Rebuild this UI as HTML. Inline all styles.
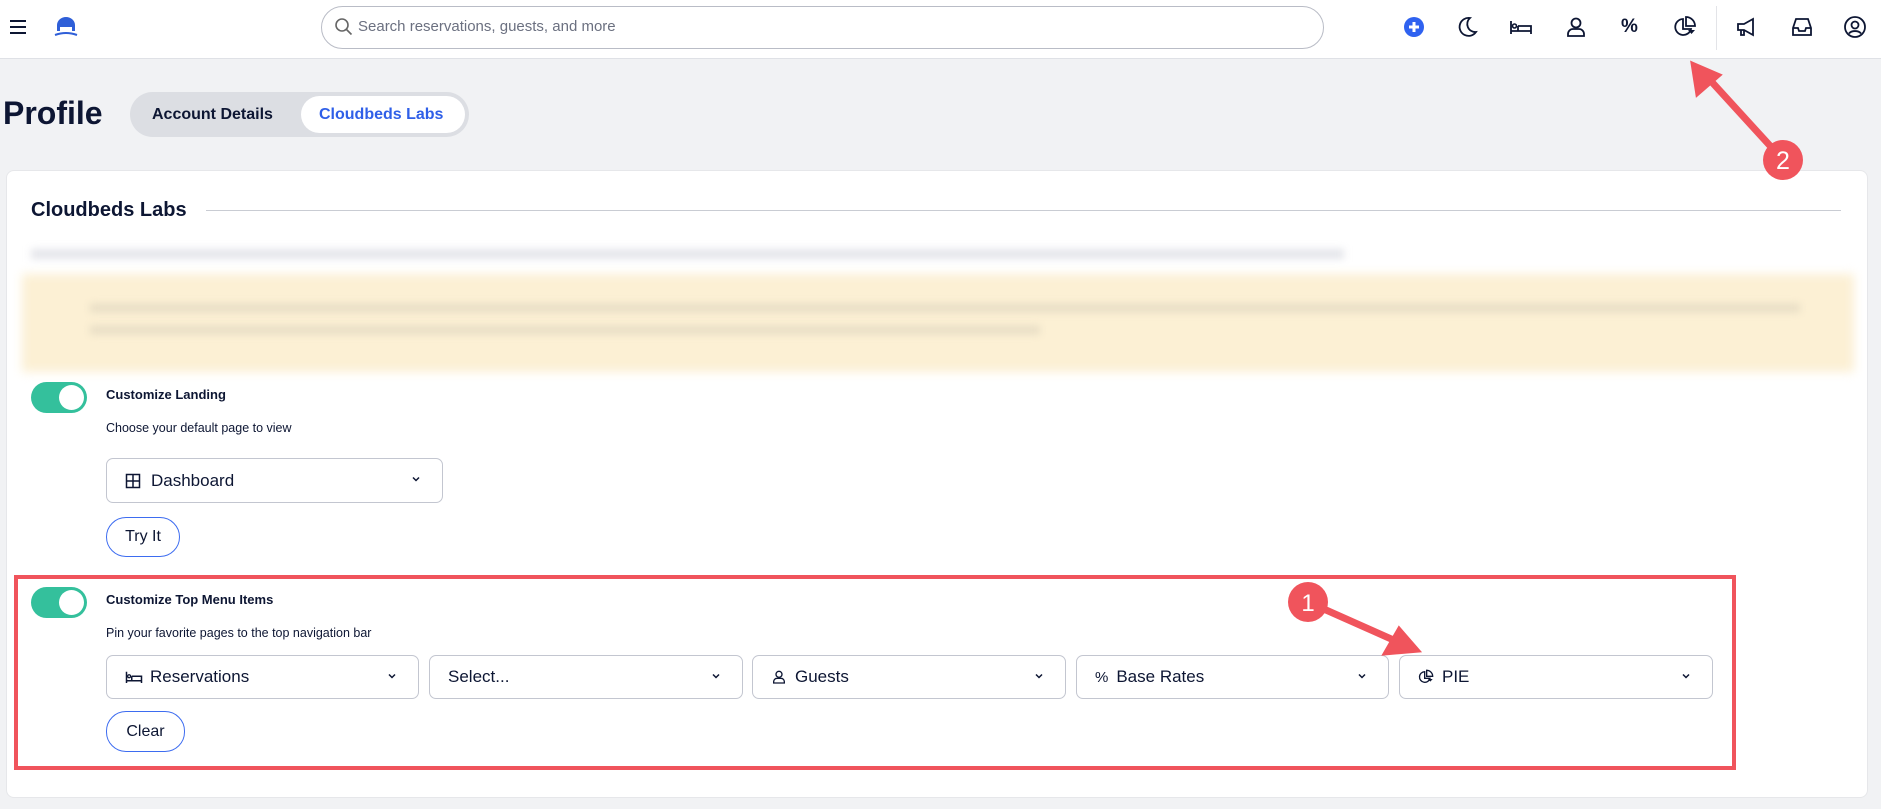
<!DOCTYPE html>
<html><head><meta charset="utf-8"><style>
*{box-sizing:border-box;margin:0;padding:0}
body{width:1881px;height:809px;background:#f1f2f4;font-family:"Liberation Sans",sans-serif;color:#0d1633;position:relative;overflow:hidden}
.a{position:absolute}
.hdr{left:0;top:0;width:1881px;height:59px;background:#fff;border-bottom:1px solid #dfe1e6}
.ico{position:absolute;top:15px;width:24px;height:24px}
.sel{position:absolute;height:44px;border:1px solid #c3c6d0;border-radius:7px;background:#fff;font-size:17px;display:flex;align-items:center;padding-left:18px}
.sel .chev{position:absolute;right:20px;top:14px}
.btn{position:absolute;border:1px solid #3d6cf0;border-radius:20px;background:#fff;font-size:16px;display:flex;align-items:center;justify-content:center}
.tog{position:absolute;width:56px;height:31px;border-radius:16px;background:#34c09c}
.tog:after{content:"";position:absolute;right:3px;top:3px;width:25px;height:25px;border-radius:50%;background:#fff}
.b{font-weight:bold;font-size:13px}
.s{font-size:12.5px}
</style></head><body>
<div class="a hdr"></div>
<svg class="a" style="left:9px;top:18px" width="18" height="18" viewBox="0 0 18 18"><path d="M1 3h16M1 9h16M1 15h16" stroke="#0d1633" stroke-width="2"/></svg>
<svg class="a" style="left:51px;top:14px" width="30" height="24" viewBox="0 0 30 24"><path d="M6 17V11a9 8 0 0 1 18 0v6h-3v-4H9v4z" fill="#2f5fd8"/><path d="M4 21q11-4 22 0" stroke="#2f5fd8" stroke-width="2" fill="none"/></svg>
<div class="a" style="left:321px;top:6px;width:1003px;height:43px;border:1px solid #b9bcc6;border-radius:22px;background:#fff"></div>
<svg class="a" style="left:334px;top:17px" width="20" height="20" viewBox="0 0 20 20"><circle cx="8" cy="8" r="6" stroke="#666" stroke-width="1.6" fill="none"/><path d="M12.5 12.5l5 5" stroke="#666" stroke-width="1.6"/></svg>
<div class="a" style="left:358px;top:18px;font-size:15px;color:#6b7080">Search reservations, guests, and more</div>
<svg class="ico" style="left:1402px" viewBox="0 0 24 24"><circle cx="12" cy="12" r="10" fill="#2f62f0"/><path d="M12 7v10M7 12h10" stroke="#fff" stroke-width="3"/></svg>
<svg class="ico" style="left:1455px" viewBox="0 0 24 24"><path d="M15 3a9 9 0 1 0 6 14A8 8 0 0 1 15 3z" stroke="#0d1633" stroke-width="1.8" fill="none"/></svg>
<svg class="ico" style="left:1509px" viewBox="0 0 24 24"><path d="M2 6v13M2 16h20v3M9 11h13v5M9 11v5" stroke="#0d1633" stroke-width="1.8" fill="none"/><circle cx="5.5" cy="11" r="2" stroke="#0d1633" stroke-width="1.6" fill="none"/></svg>
<svg class="ico" style="left:1564px" viewBox="0 0 24 24"><circle cx="12" cy="8" r="4.5" stroke="#0d1633" stroke-width="1.8" fill="none"/><path d="M4 21v-2a5 5 0 0 1 5-5h6a5 5 0 0 1 5 5v2z" stroke="#0d1633" stroke-width="1.8" fill="none"/></svg>
<div class="a" style="left:1621px;top:16px;font-size:19px;font-weight:bold">%</div>
<svg class="ico" style="left:1673px" viewBox="0 0 24 24"><path d="M10 4a8 8 0 1 0 8 10h-8z" stroke="#0d1633" stroke-width="1.8" fill="none"/><path d="M13 2v9h9a9 9 0 0 0-9-9z" stroke="#0d1633" stroke-width="1.8" fill="none"/><path d="M15 15h7l-3.5 4z" fill="#0d1633"/></svg>
<div class="a" style="left:1716px;top:6px;width:1px;height:44px;background:#e3e4e8"></div>
<svg class="ico" style="left:1735px" viewBox="0 0 24 24"><path d="M3 9h6l9-5v16l-9-5H3zM6 15v5h3v-5" stroke="#0d1633" stroke-width="1.8" fill="none"/></svg>
<svg class="ico" style="left:1790px" viewBox="0 0 24 24"><path d="M3 13l3-9h12l3 9v7H3zM3 13h5l1 3h6l1-3h5" stroke="#0d1633" stroke-width="1.8" fill="none"/></svg>
<svg class="ico" style="left:1843px" viewBox="0 0 24 24"><circle cx="12" cy="12" r="10" stroke="#0d1633" stroke-width="1.8" fill="none"/><circle cx="12" cy="10" r="3.5" stroke="#0d1633" stroke-width="1.8" fill="none"/><path d="M6 18.5a7 5 0 0 1 12 0" stroke="#0d1633" stroke-width="1.8" fill="none"/></svg>

<div class="a" style="left:3px;top:95px;font-size:32px;font-weight:bold">Profile</div>
<div class="a" style="left:130px;top:92px;width:339px;height:45px;border-radius:23px;background:#dcdee3"></div>
<div class="a" style="left:152px;top:106px;font-size:16px;font-weight:bold">Account Details</div>
<div class="a" style="left:301px;top:96px;width:164px;height:37px;border-radius:19px;background:#fff"></div>
<div class="a" style="left:319px;top:106px;font-size:16px;font-weight:bold;color:#2f5fe8">Cloudbeds Labs</div>

<div class="a" style="left:6px;top:170px;width:1862px;height:628px;background:#fff;border-radius:8px;border:1px solid #e6e7ea"></div>
<div class="a" style="left:31px;top:199px;font-size:20px;font-weight:bold">Cloudbeds Labs</div>
<div class="a" style="left:206px;top:210px;width:1635px;height:1px;background:#c9ccd3"></div>
<div class="a" style="left:31px;top:249px;width:1313px;height:10px;background:#e4e5ea;filter:blur(4px)"></div>
<div class="a" style="left:22px;top:274px;width:1832px;height:98px;background:#fcf0d4;filter:blur(5px)"></div>
<div class="a" style="left:90px;top:304px;width:1710px;height:8px;background:#e6dcc4;filter:blur(4px)"></div>
<div class="a" style="left:90px;top:326px;width:950px;height:8px;background:#e6dcc4;filter:blur(4px)"></div>

<div class="tog" style="left:31px;top:382px"></div>
<div class="a b" style="left:106px;top:387px">Customize Landing</div>
<div class="a s" style="left:106px;top:421px">Choose your default page to view</div>
<div class="sel" style="left:106px;top:458px;width:337px;height:45px"><svg width="16" height="16" viewBox="0 0 16 16" style="margin-right:10px"><path d="M1.5 1.5h13v13h-13zM8 1.5v13M1.5 8h13" stroke="#0d1633" stroke-width="1.5" fill="none"/></svg>Dashboard<svg class="chev" width="12" height="12" viewBox="0 0 12 12"><path d="M3 4.5l3 3 3-3" stroke="#0d1633" stroke-width="1.5" fill="none"/></svg></div>
<div class="btn" style="left:106px;top:517px;width:74px;height:40px">Try It</div>

<div class="a" style="left:14px;top:575px;width:1722px;height:195px;border:4px solid #f0545c"></div>
<div class="tog" style="left:31px;top:587px"></div>
<div class="a b" style="left:106px;top:592px">Customize Top Menu Items</div>
<div class="a s" style="left:106px;top:626px">Pin your favorite pages to the top navigation bar</div>
<div class="sel" style="left:106px;top:655px;width:313px"><svg width="18" height="16" viewBox="0 0 24 20" style="margin-right:7px"><path d="M2 3v15M2 15h20v3M9 9h13v6M9 9v6" stroke="#0d1633" stroke-width="2" fill="none"/><circle cx="5.5" cy="9" r="2" stroke="#0d1633" stroke-width="1.8" fill="none"/></svg>Reservations<svg class="chev" width="12" height="12" viewBox="0 0 12 12"><path d="M3 4.5l3 3 3-3" stroke="#0d1633" stroke-width="1.5" fill="none"/></svg></div>
<div class="sel" style="left:429px;top:655px;width:314px">Select...<svg class="chev" width="12" height="12" viewBox="0 0 12 12"><path d="M3 4.5l3 3 3-3" stroke="#0d1633" stroke-width="1.5" fill="none"/></svg></div>
<div class="sel" style="left:752px;top:655px;width:314px"><svg width="16" height="16" viewBox="0 0 24 24" style="margin-right:8px"><circle cx="12" cy="8" r="4.5" stroke="#0d1633" stroke-width="2" fill="none"/><path d="M4 21v-2a5 5 0 0 1 5-5h6a5 5 0 0 1 5 5v2z" stroke="#0d1633" stroke-width="2" fill="none"/></svg>Guests<svg class="chev" width="12" height="12" viewBox="0 0 12 12"><path d="M3 4.5l3 3 3-3" stroke="#0d1633" stroke-width="1.5" fill="none"/></svg></div>
<div class="sel" style="left:1076px;top:655px;width:313px"><span style="font-size:15px;margin-right:8px">%</span>Base Rates<svg class="chev" width="12" height="12" viewBox="0 0 12 12"><path d="M3 4.5l3 3 3-3" stroke="#0d1633" stroke-width="1.5" fill="none"/></svg></div>
<div class="sel" style="left:1399px;top:655px;width:314px"><svg width="16" height="16" viewBox="0 0 24 24" style="margin-right:8px"><path d="M10 4a8 8 0 1 0 8 10h-8z" stroke="#0d1633" stroke-width="2" fill="none"/><path d="M13 2v9h9a9 9 0 0 0-9-9z" stroke="#0d1633" stroke-width="2" fill="none"/><path d="M15 15h7l-3.5 4z" fill="#0d1633"/></svg>PIE<svg class="chev" width="12" height="12" viewBox="0 0 12 12"><path d="M3 4.5l3 3 3-3" stroke="#0d1633" stroke-width="1.5" fill="none"/></svg></div>
<div class="btn" style="left:106px;top:711px;width:79px;height:41px">Clear</div>

<svg class="a" style="left:0;top:0" width="1881" height="809">
<path d="M1308 602L1398 642" stroke="#f0545c" stroke-width="7"/>
<path d="M1419 651L1384 654L1399 628z" fill="#f0545c" stroke="#f0545c" stroke-width="3"/>
<circle cx="1308" cy="602" r="20" fill="#f0545c"/>
<text x="1308" y="611" font-family="Liberation Sans" font-size="24" fill="#fff" text-anchor="middle">1</text>
<path d="M1783 160L1710 80" stroke="#f0545c" stroke-width="7"/>
<path d="M1692 63L1720 75L1697 95z" fill="#f0545c" stroke="#f0545c" stroke-width="3"/>
<circle cx="1783" cy="160" r="20" fill="#f0545c"/>
<text x="1783" y="169" font-family="Liberation Sans" font-size="25" fill="#fff" text-anchor="middle">2</text>
</svg>
</body></html>
